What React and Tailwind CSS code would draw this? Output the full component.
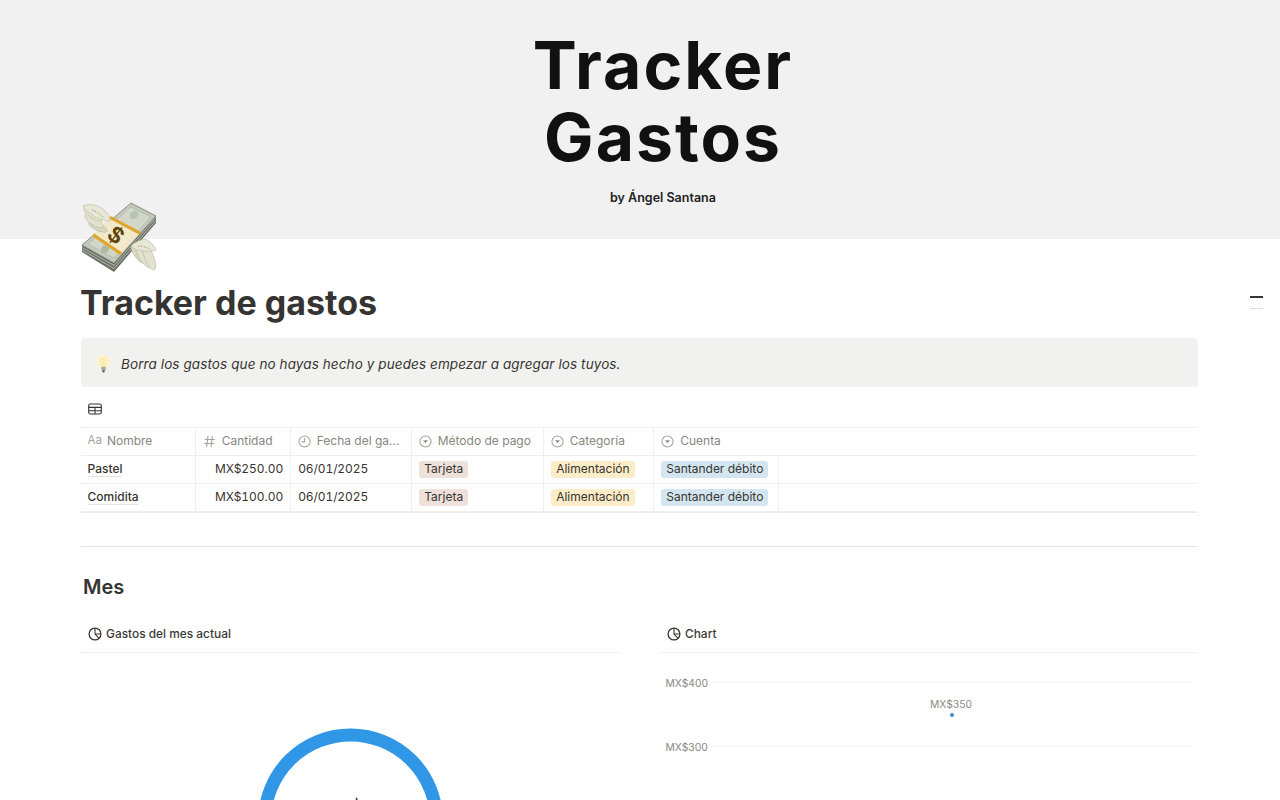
import React from "react";

function PieIcon({ className = "" }) {
  return (
    <svg viewBox="0 0 14 14" className={className} fill="none" stroke="#37352f" strokeWidth="1.3">
      <circle cx="7" cy="7" r="5.9" />
      <path d="M7 1.2V7l3.9 4.2M7 7h5.6" strokeWidth="1.1" />
    </svg>
  );
}
function ClockIcon() {
  return (
    <svg viewBox="0 0 14 14" className="w-[13px] h-[13px]" fill="none" stroke="#a3a29e" strokeWidth="1.1">
      <circle cx="7" cy="7" r="6" />
      <path d="M7.2 3.2V7.4H3.8" />
    </svg>
  );
}
function SelectIcon() {
  return (
    <svg viewBox="0 0 14 14" className="w-[13px] h-[13px]" fill="none" stroke="#a3a29e" strokeWidth="1.1">
      <circle cx="7" cy="7" r="6" />
      <path d="M4.4 5.6h5.2L7 9z" fill="#8f8e8a" stroke="none" />
    </svg>
  );
}
function HashIcon() {
  return (
    <svg viewBox="0 0 14 14" className="w-[13px] h-[13px]" fill="none" stroke="#a3a29e" strokeWidth="1.2">
      <path d="M5.4 1.2 3.8 12.8M10.2 1.2 8.6 12.8M1.8 4.8h11M1.2 9.2h11" />
    </svg>
  );
}
function TableIcon() {
  return (
    <svg viewBox="0 0 14 12" className="w-[14px] h-[12px]" fill="none" stroke="#37352f" strokeWidth="1.1">
      <rect x="0.7" y="1" width="12.6" height="10" rx="1.6" />
      <path d="M0.7 4.4h12.6M0.7 7.7h12.6M7 4.4V11" />
    </svg>
  );
}
function Bulb() {
  return (
    <svg viewBox="0 0 16 20" className="w-[15px] h-[19px] shrink-0">
      <circle cx="8" cy="7" r="7.4" fill="#fdf3cf" />
      <path d="M3.4 6.800a4.600 4.600 0 1 1 9.200 0c0 2.200-1.800 3.200-2.200 5.600H5.600C5.200 10 3.400 9 3.400 6.800z" fill="#fbebb4" />
      <rect x="5.6" y="12.400" width="4.800" height="3.600" rx="0.800" fill="#a9a79f" />
      <path d="M6.400 16h3.200L8.800 18.600H7.200z" fill="#5f5e5a" />
    </svg>
  );
}
function Feather({ cx, cy, rx, ry, rot, fill = "#e3e2cf" }) {
  return <ellipse cx={cx} cy={cy} rx={rx} ry={ry} fill={fill} stroke="#b9b8a0" strokeWidth="0.6" transform={`rotate(${rot} ${cx} ${cy})`} />;
}
function MoneyEmoji() {
  return (
    <svg viewBox="0 0 78 70" className="w-[78px] h-[70px] block">
      <path d="M1 43 33 61 75 13V21L33 70 1 50z" fill="#6b7166" />
      <path d="M1 45.500 33 63.500 75 15.500M1 48 33 66.500 75 18.500" stroke="#c9ccbf" strokeWidth="0.8" fill="none" />
      <path d="M50 1 75 14 33 61 1 43z" fill="#c3cabb" stroke="#7f877a" strokeWidth="0.9" />
      <path d="M50 5 70 15 33 56 7 42z" fill="#d2d7ca" stroke="#a4ab9b" strokeWidth="0.5" />
      <ellipse cx="53" cy="13" rx="5" ry="3.600" fill="#b5c6ae" transform="rotate(-45 53 13)" />
      <ellipse cx="24" cy="47" rx="5" ry="3.600" fill="#b0b7a8" transform="rotate(-45 24 47)" />
      <path d="M30 14 60 30 39 53 11 34z" fill="#f1e9ca" />
      <path d="M30 14 60 30 58 32.500 28 16.500z" fill="#dca62e" />
      <path d="M13 31.500 41 50.500 39 53 11 34z" fill="#dca62e" />
      <text x="35" y="41" textAnchor="middle" fontFamily="'Liberation Sans', sans-serif" fontWeight="700" fontSize="24" fill="#5f4308" transform="rotate(38 35 33)">$</text>
      <Feather cx="17" cy="25" rx="10" ry="3.500" rot="25" fill="#d8d7c2" />
      <Feather cx="13" cy="19" rx="11" ry="4" rot="35" />
      <Feather cx="12" cy="12" rx="11" ry="4" rot="35" />
      <path d="M2 4C9 1 17 3 23 8c4 3 6 7 6 11-6 0-13-3-18-6C7 10 3 7 2 4z" fill="#e8e7d6" stroke="#b9b8a0" strokeWidth="0.6" />
      <path d="M11 8c4 1 8 4 12 8" stroke="#8f8e76" strokeWidth="0.9" strokeDasharray="1.500 1.500" fill="none" />
      <Feather cx="57" cy="52" rx="11" ry="3.800" rot="55" fill="#d8d7c2" />
      <Feather cx="62" cy="54" rx="13" ry="4.200" rot="60" />
      <Feather cx="68" cy="55" rx="14" ry="4.500" rot="68" />
      <path d="M50 44c4-4 9-6 14-7 5 2 9 6 11 11-4 2-9 2-13 1-5 0-9-2-12-5z" fill="#e8e7d6" stroke="#b9b8a0" strokeWidth="0.6" />
      <path d="M57 44c4 0 9 1 13 4" stroke="#8f8e76" strokeWidth="0.9" strokeDasharray="1.500 1.500" fill="none" />
    </svg>
  );
}

const cols = ["w-[115.200px]", "w-[95px]", "w-[121px]", "w-[132px]", "w-[110px]", "w-[124.800px]"];

function Head({ w, icon, label }) {
  return (
    <div className={`${w} shrink-0 h-full flex items-center gap-[6px] px-[6.500px] pb-[1px] border-r border-[#efefed] text-[12px] text-[#87867f] whitespace-nowrap`}>
      {icon}
      <span>{label}</span>
    </div>
  );
}
function Tag({ bg, children }) {
  return <span className={`${bg} rounded-[3px] px-[5px] h-[17px] flex items-center text-[12px] leading-none text-[#37352f] whitespace-nowrap`}>{children}</span>;
}
function Row({ name, amount }) {
  return (
    <div className="flex h-[28px] border-b border-[#efefed] text-[12px] text-[#37352f]">
      <div className={`${cols[0]} shrink-0 flex items-center px-[6.500px] border-r border-[#efefed] font-medium`}>
        <span className="border-b border-[#e3e3e0] leading-[14px]">{name}</span>
      </div>
      <div className={`${cols[1]} shrink-0 flex items-center justify-end px-[7px] pb-[1px] border-r border-[#efefed] tabular-nums tracking-[-0.05px]`}>{amount}</div>
      <div className={`${cols[2]} shrink-0 flex items-center px-[7px] pb-[1px] border-r border-[#efefed] tabular-nums tracking-[-0.1px]`}>06/01/2025</div>
      <div className={`${cols[3]} shrink-0 flex items-center px-[7px] pb-[1px] border-r border-[#efefed]`}><Tag bg="bg-[#eee0da]">Tarjeta</Tag></div>
      <div className={`${cols[4]} shrink-0 flex items-center px-[7px] pb-[1px] border-r border-[#efefed]`}><Tag bg="bg-[#fdecc8]">Alimentación</Tag></div>
      <div className={`${cols[5]} shrink-0 flex items-center px-[7px] pb-[1px] border-r border-[#efefed]`}><Tag bg="bg-[#d3e5ef]">Santander débito</Tag></div>
    </div>
  );
}
function ChartHead({ label }) {
  return (
    <div className="h-[34px] flex items-center gap-[4px] pl-[7px] pb-[3px] border-b border-[#efefed] text-[11.900px] font-medium text-[#3b3a37] mt-[-1px]">
      <PieIcon className="w-[14px] h-[14px]" />
      <span>{label}</span>
    </div>
  );
}

export default function App() {
  return (
    <div className="relative h-[800px] overflow-hidden bg-white font-['Inter',sans-serif]">
      <div className="h-[239px] bg-[#f1f1f1] flex flex-col items-center pl-[46px] pt-[29px] text-[#111111]">
        <div className="text-[66px] leading-[72px] font-bold tracking-[2px]">Tracker</div>
        <div className="text-[66px] leading-[72px] font-bold tracking-[2px]">Gastos</div>
        <div className="text-[12.500px] leading-[16px] font-semibold mt-[17px] text-[#222222]">by Ángel Santana</div>
      </div>

      <div className="w-[1117px] ml-[81px]">
        <div className="-mt-[37px] h-[70px] relative"><MoneyEmoji /></div>
        <h1 className="mt-[9px] -ml-[1px] text-[34px] leading-[44px] font-bold text-[#353432]">Tracker de gastos</h1>

        <div className="mt-[13px] h-[49px] pt-[4px] bg-[#f1f1ef] rounded-[4px] flex items-center gap-[10px] pl-[15px] text-[13.500px] italic text-[#37352f] tracking-[0.1px]">
          <Bulb />
          <span>Borra los gastos que no hayas hecho y puedes empezar a agregar los tuyos.</span>
        </div>

        <div className="h-[39px] flex items-center pl-[7px] pt-[2px] mt-[1px]"><TableIcon /></div>

        <div className="border-t border-[#efefed] border-b-2 border-b-[#ecebea]">
          <div className="flex h-[28px] border-b border-[#efefed]">
            <Head w={cols[0]} icon={<span className="text-[#a3a29e] text-[11.500px] -mr-[1px]">Aa</span>} label="Nombre" />
            <Head w={cols[1]} icon={<HashIcon />} label="Cantidad" />
            <Head w={cols[2]} icon={<ClockIcon />} label="Fecha del ga..." />
            <Head w={cols[3]} icon={<SelectIcon />} label="Método de pago" />
            <Head w={cols[4]} icon={<SelectIcon />} label="Categoría" />
            <div className={`${cols[5]} shrink-0 h-full flex items-center gap-[6px] px-[7px] pb-[1px] text-[12px] text-[#87867f]`}><SelectIcon /><span>Cuenta</span></div>
          </div>
          <Row name="Pastel" amount="MX$250.00" />
          <div className="-mb-px"><Row name="Comidita" amount="MX$100.00" /></div>
        </div>

        <div className="mt-[33px] border-t border-[#e3e3e1]" />

        <h2 className="mt-[26px] pl-[2px] text-[20px] leading-[28px] font-semibold text-[#353432]">Mes</h2>

        <div className="mt-[19px] flex gap-[40px]">
          <div className="w-[539px]">
            <ChartHead label="Gastos del mes actual" />
            <svg viewBox="0 0 539 150" className="w-[539px] h-[150px] block">
              <circle cx="269.500" cy="168" r="86" fill="none" stroke="#2f97e6" strokeWidth="13" />
              <text x="279" y="164.500" textAnchor="middle" fontFamily="Inter, sans-serif" fontWeight="600" fontSize="24" fill="#1f1f1f">MX$350</text>
            </svg>
          </div>
          <div className="w-[538px]">
            <ChartHead label="Chart" />
            <svg viewBox="0 0 538 150" className="w-[538px] h-[150px] block">
              <g fontFamily="Inter, sans-serif" fontSize="10.300" fill="#8a8985">
                <text x="5.500" y="33.500">MX$400</text>
                <text x="5.500" y="97.500">MX$300</text>
                <text x="291" y="54.500" textAnchor="middle">MX$350</text>
              </g>
              <path d="M54 29H532M54 93H532" stroke="#f0f0ee" strokeWidth="1" strokeDasharray="2 2" />
              <circle cx="292" cy="62" r="2" fill="#3a8fd0" />
            </svg>
          </div>
        </div>
      </div>

      <div className="absolute left-[1250px] top-[296px] w-[13px] h-[2px] bg-[#37352f]" />
      <div className="absolute left-[1250px] top-[308px] w-[13px] h-[1px] bg-[#dcdcda]" />
    </div>
  );
}
